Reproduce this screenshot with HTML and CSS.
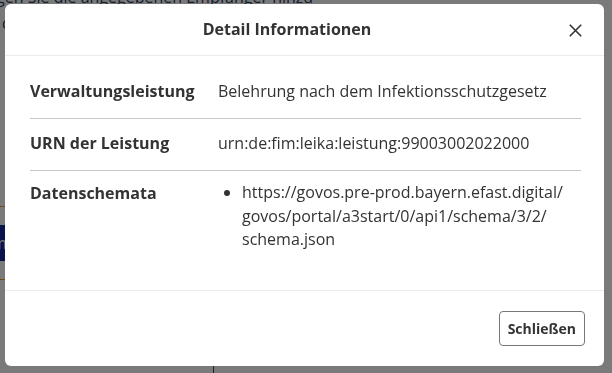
FILE: index.html
```html
<!DOCTYPE html>
<html lang="de">
<head>
<meta charset="utf-8">
<title>Detail Informationen</title>
<link rel="stylesheet" href="styles.css">
</head>
<body>
<div class="page">
  <p class="page-hint">Fügen Sie die angegebenen Empfänger hinzu</p>
  <p class="page-line">d</p>
  <div class="page-spacer"></div>
  <div class="page-band">
    <div class="page-tab">m</div>
  </div>
  <div class="page-bottom">
    <div class="page-col"></div>
  </div>
</div>
<div class="backdrop"></div>
<div class="modal" role="dialog" aria-labelledby="modal-title">
  <div class="modal-header">
    <h2 class="modal-title" id="modal-title">Detail Informationen</h2>
    <button class="close-btn" aria-label="Schließen">
      <svg width="13" height="13" viewBox="0 0 13 13"><path d="M0.8 0.8 L12.2 12.2 M12.2 0.8 L0.8 12.2" stroke="#333" stroke-width="1.6" fill="none"/></svg>
    </button>
  </div>
  <div class="modal-body">
    <div class="row">
      <div class="label">Verwaltungsleistung</div>
      <div class="value">Belehrung nach dem Infektionsschutzgesetz</div>
    </div>
    <div class="row">
      <div class="label">URN der Leistung</div>
      <div class="value">urn:de:fim:leika:leistung:99003002022000</div>
    </div>
    <div class="row row-last">
      <div class="label">Datenschemata</div>
      <ul class="value list">
        <li>https://govos.pre-prod.bayern.efast.digital/<wbr>govos/<wbr>portal/<wbr>a3start/<wbr>0/<wbr>api1/<wbr>schema/<wbr>3/<wbr>2/<wbr>schema.json</li>
      </ul>
    </div>
  </div>
  <div class="modal-footer">
    <button class="btn">Schließen</button>
  </div>
</div>
</body>
</html>
```
FILE: styles.css
```css
html, body {
  margin: 0;
  padding: 0;
  height: 100%;
  overflow: hidden;
}
body {
  background: #ffffff;
  font-family: "Open Sans", "Noto Sans", sans-serif;
  color: #333333;
}
.page {
  height: 100%;
  display: flex;
  flex-direction: column;
}
.page-hint {
  margin: -13px 0 0 -22px;
  font-size: 16px;
  line-height: 20px;
  color: #2c3d60;
  white-space: nowrap;
}
.page-line {
  margin: 6px 0 0 2px;
  font-size: 16px;
  line-height: 20px;
  color: #2c3d60;
}
.page-spacer {
  height: 173px;
}
.page-band {
  width: 120px;
  height: 72px;
  border-top: 1px solid #f29a2e;
  border-bottom: 1px solid #f29a2e;
  display: flex;
  align-items: center;
}
.page-tab {
  width: 40px;
  height: 36px;
  background: #16299f;
  color: #ffffff;
  font-size: 16px;
  line-height: 36px;
  text-indent: -8px;
  overflow: hidden;
}
.page-bottom {
  flex: 1;
  display: flex;
}
.page-col {
  width: 213px;
  border-right: 1px solid #4a4a4a;
}
.backdrop {
  position: fixed;
  inset: 0;
  background: rgba(0, 0, 0, 0.52);
}
.modal {
  position: fixed;
  left: 5px;
  top: 4px;
  width: 599px;
  height: 362px;
  background: #ffffff;
  border-radius: 6px;
  display: flex;
  flex-direction: column;
  overflow: hidden;
}
.modal-header {
  height: 51px;
  border-bottom: 1px solid #e9ecef;
  display: flex;
  align-items: center;
  padding-left: 16px;
  flex-shrink: 0;
}
.modal-title {
  flex: 1;
  margin: 0;
  text-align: center;
  font-size: 16px;
  font-weight: 700;
  line-height: 24px;
  color: #333333;
  padding-bottom: 1px;
}
.close-btn {
  width: 51px;
  height: 51px;
  padding: 0 0 0 16px;
  border: 0;
  background: transparent;
  display: flex;
  align-items: center;
  justify-content: flex-start;
}
.close-btn svg {
  margin-top: 1px;
}
.modal-body {
  flex: 1;
  padding: 11px 23px 0 25px;
}
.row {
  display: flex;
  padding: 12px 0 15px;
  border-bottom: 1px solid #c8c8c8;
  font-size: 16px;
  line-height: 24px;
}
.row-last {
  border-bottom: 0;
  padding-top: 10px;
}
.label {
  width: 188px;
  flex-shrink: 0;
  font-weight: 700;
  color: #333333;
}
.value {
  flex: 1;
  color: #333333;
}
.list {
  margin: 0;
  padding-left: 24px;
  line-height: 23.5px;
}
.modal-footer {
  height: 75px;
  border-top: 1px solid #e9ecef;
  display: flex;
  align-items: center;
  justify-content: flex-end;
  padding-right: 19px;
  flex-shrink: 0;
}
.btn {
  font-family: "Open Sans", "Noto Sans", sans-serif;
  font-size: 14px;
  font-weight: 700;
  line-height: 21px;
  color: #333333;
  background: #ffffff;
  border: 1px solid #777777;
  border-radius: 4px;
  padding: 6px 8px;
  height: 35px;
}
```
